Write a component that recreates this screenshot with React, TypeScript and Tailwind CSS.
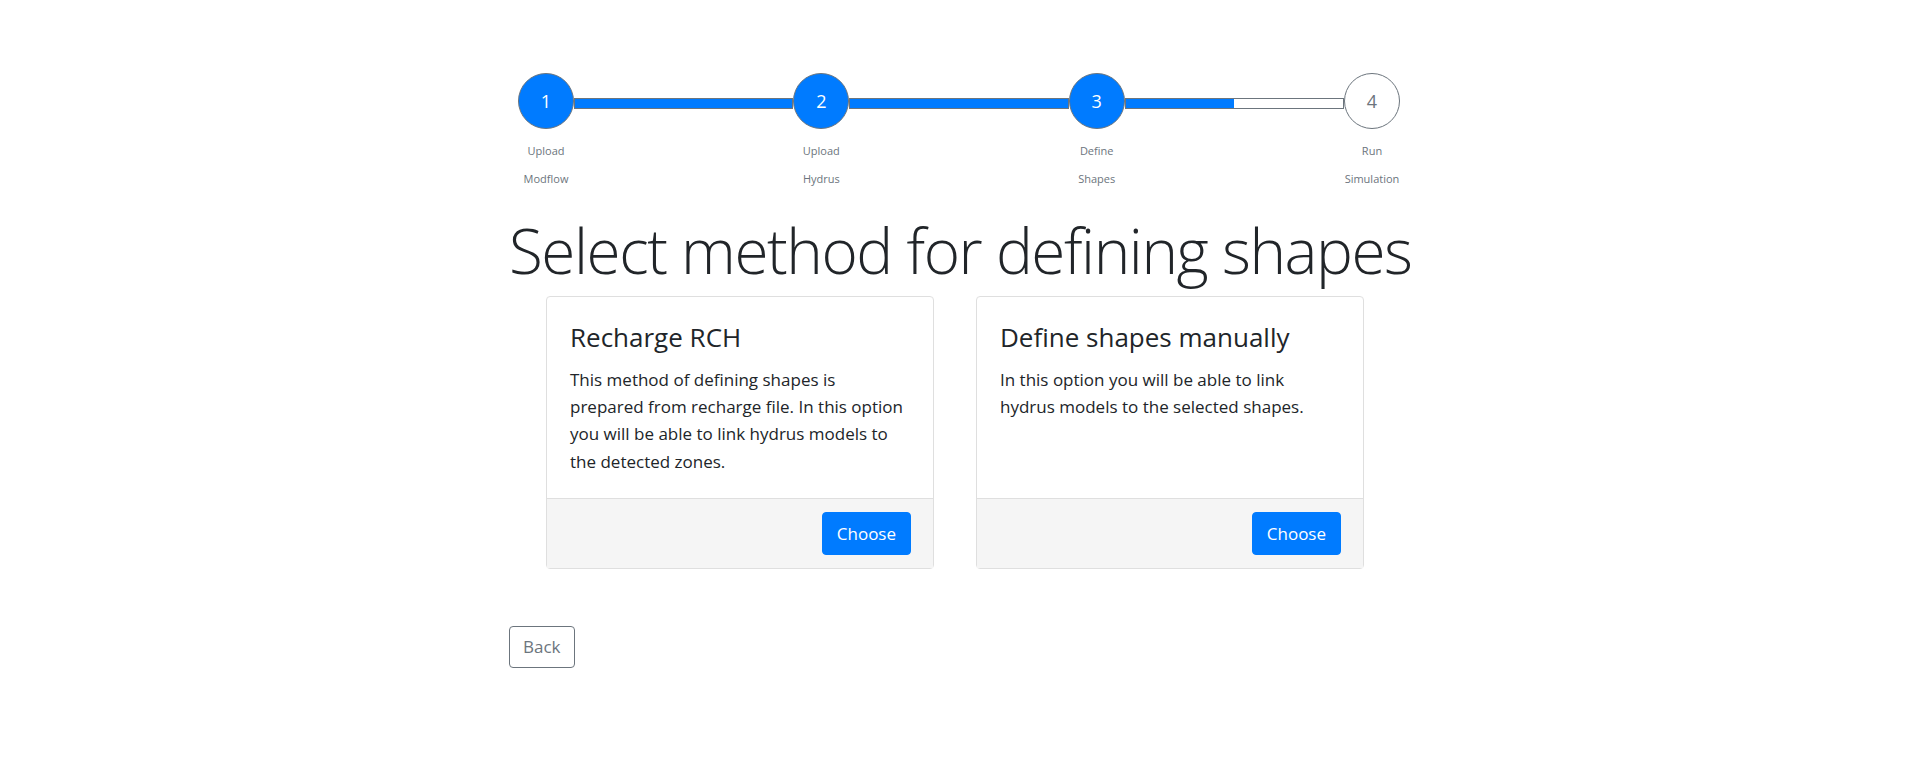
import React from 'react'

const steps = [
  { n: 1, top: 'Upload', bottom: 'Modflow', done: true },
  { n: 2, top: 'Upload', bottom: 'Hydrus', done: true },
  { n: 3, top: 'Define', bottom: 'Shapes', done: true },
  { n: 4, top: 'Run', bottom: 'Simulation', done: false },
]

// fill of the line leading out of each step
const fills = ['w-full', 'w-full', 'w-1/2']

const methods = [
  {
    title: 'Recharge RCH',
    text: 'This method of defining shapes is prepared from recharge file. In this option you will be able to link hydrus models to the detected zones.',
  },
  {
    title: 'Define shapes manually',
    text: 'In this option you will be able to link hydrus models to the selected shapes.',
  },
]

function Stepper() {
  return (
    <div>
      <div className="flex items-start px-[9px]">
        {steps.map((s, i) => (
          <React.Fragment key={s.n}>
            <div
              className={
                s.done
                  ? 'flex h-[56px] w-[56px] shrink-0 items-center justify-center rounded-full border border-[#6c757d] bg-[#007bff] text-[18px] text-white'
                  : 'flex h-[56px] w-[56px] shrink-0 items-center justify-center rounded-full border border-[#6c757d] bg-white text-[18px] text-[#6c757d]'
              }
            >
              {s.n}
            </div>
            {i < steps.length - 1 && (
              <div className="mt-[25px] h-[11px] flex-1 border border-[#6c757d] bg-white">
                <div className={`h-full bg-[#007bff] ${fills[i]}`} />
              </div>
            )}
          </React.Fragment>
        ))}
      </div>
      <div className="mt-[15px] flex justify-between">
        {steps.map((s) => (
          <div key={s.n} className="flex w-[74px] flex-col items-center gap-[14px] text-[11px] leading-[14px] text-[#6c757d]">
            <span>{s.top}</span>
            <span>{s.bottom}</span>
          </div>
        ))}
      </div>
    </div>
  )
}

function MethodCard({ title, text }: { title: string; text: string }) {
  return (
    <div className="flex w-[388px] flex-col rounded-[4px] border border-[#dfdfdf] bg-white">
      <div className="flex-1 px-[23px] pb-[23px] pt-[24px]">
        <h4 className="mb-[12px] text-[26px] font-normal leading-[1.25] text-[#212529]">{title}</h4>
        <p className="text-[17px] leading-[27.4px] text-[#212529]">{text}</p>
      </div>
      <div className="flex justify-end border-t border-[#dfdfdf] bg-[#f5f5f5] px-[22px] py-[13px]">
        <button className="rounded-[4px] border border-[#007bff] bg-[#007bff] px-[14px] text-[17px] leading-[41px] text-white">
          Choose
        </button>
      </div>
    </div>
  )
}

export default function App() {
  return (
    <div className="min-h-screen bg-white font-['Open_Sans',sans-serif] text-[#212529]">
      <div className="mx-auto w-[900px] pt-[73px]">
        <Stepper />
        <h1 className="mt-[26px] whitespace-nowrap text-[62px] font-light leading-[77px] tracking-[-1.45px] text-[#212529]">
          Select method for defining shapes
        </h1>
        <div className="mt-[7px] flex items-stretch gap-[42px] pl-[37px]">
          {methods.map((m) => (
            <MethodCard key={m.title} title={m.title} text={m.text} />
          ))}
        </div>
        <button className="mt-[57px] rounded-[4px] border border-[#6c757d] bg-white px-[13px] text-[17px] leading-[40px] text-[#6c757d]">
          Back
        </button>
      </div>
    </div>
  )
}
